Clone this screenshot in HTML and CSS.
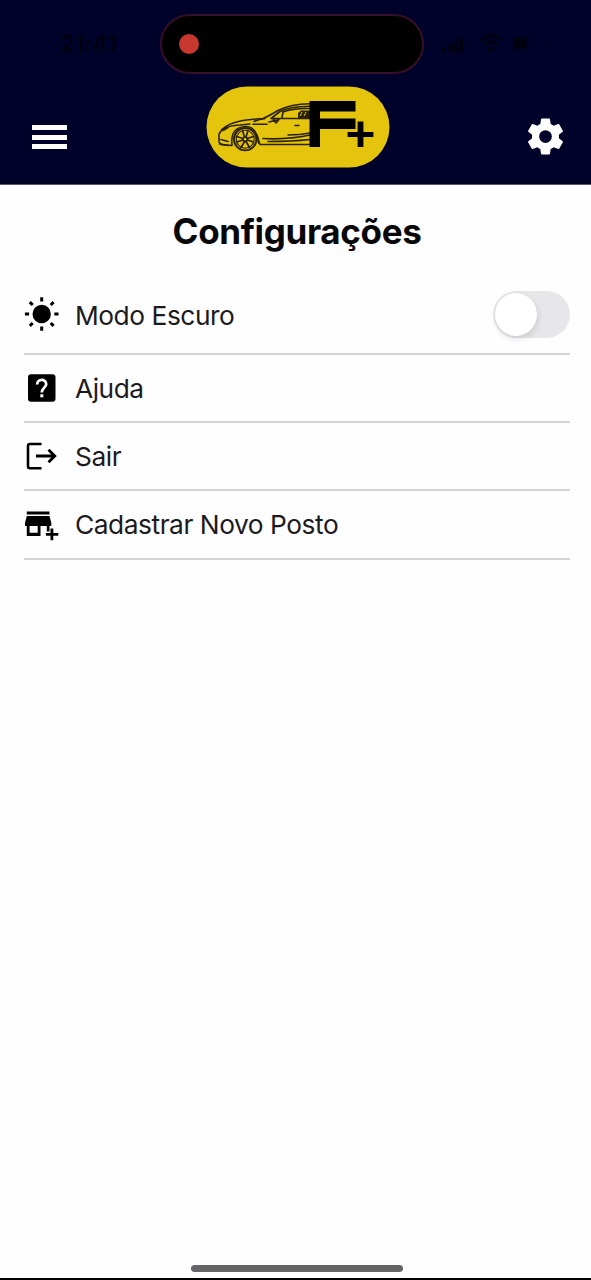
FILE: index.html
```
<!DOCTYPE html>
<html lang="pt-BR">
<head>
<meta charset="utf-8">
<title>Configurações</title>
<link rel="stylesheet" href="styles.css">
</head>
<body>
<div class="screen">
  <header class="header">
    <div class="status">
      <span class="time">21:41</span>
      <div class="island"><span class="record"></span></div>
      <svg class="signals" viewBox="440 30 112 26">
        <path d="M442 47h4v5h-4zM448.500 44.500h4v7.500h-4zM454 41.500h4v10.500h-4zM459.500 38h4v14h-4z"/>
        <g fill="none" stroke="#000010" stroke-width="3"><path d="M480.500 40Q491 31.500 501.500 40M484 44.500Q491 39 498 44.500"/></g>
        <path d="M487 48q4-3 8 0l-4 4z"/>
        <rect x="514" y="37" width="13" height="12" rx="3"/>
        <rect x="512" y="35" width="34" height="16" rx="5" fill="none" stroke="#000024"/>
        <path d="M548 40v6" stroke="#00001e" stroke-width="2"/>
      </svg>
    </div>
    <nav class="bar">
      <div class="menu"><span></span><span></span><span></span></div>
      <svg class="logo" viewBox="206 86 184 82">
        <rect x="206.500" y="86.500" width="183" height="81" rx="40.500" fill="#e4c40c"/>
        <g fill="none" stroke="#2b2205" stroke-width="1.600" stroke-linecap="round" stroke-linejoin="round">
          <path d="M310 103.800C295 104 286 106.500 278 110.500Q270 115.500 263 118.500C247 119.500 230 121 222 129.500L219 134V141.500Q220 144.800 224 144.800L232 145.500"/>
          <path d="M222 129.500Q229 125.500 240 125L250 124M221 139.500L228 141.500M219.500 144L228 145.500M223 130.500L228 127.500M265 118.500Q258 119.500 254 121.500M253 124.300H267"/>
          <path d="M310 106.200Q289 106.500 280 111.500L271 118.500H310M283 112L282 118M310 108.500Q293 108 283 112"/>
          <path d="M269 122L279 119.500M273 118.500L276 123L279 119.500M257 135Q259 142 260 144.500H310M268 141.500Q292 141.500 310 139.500M263 138.500Q286 140 310 135M288 135Q300 135 310 133M295 125.500H299"/>
          <path d="M232 145Q230 127 246 126.500Q257 127 258.500 143"/>
          <circle cx="245.200" cy="139.200" r="11.200" stroke-width="1.900"/>
          <circle cx="245.200" cy="139.200" r="9" stroke-width="1.100"/>
          <circle cx="245.200" cy="139.200" r="2.200"/>
          <path stroke-width="1.700" d="M244.500 137L242.500 130.500M246 137L248 130.500M247 138.500L253.500 136.500M247.500 140L253.500 142M246 141.500L249.500 147.500M244.500 141.500L241 147.500M243 140L236.700 142M243 138.500L236.700 136.500"/>
        </g>
        <path d="M298 118V113L301 110.500H310V118z" fill="#2b2205"/>
        <path d="M300 116L302 112M304 116L306 112" stroke="#e4c40c" stroke-width="1"/>
        <path d="M309.500 101H355.500V111.500H320V118.500H355.500V129H320V147H309.500z" fill="#000"/>
        <path d="M347 131.500H357V121H364V131.500H374V137.500H364V147.500H357V137.500H347z" fill="#000" stroke="#e4c40c" stroke-width="1.200"/>
      </svg>
      <svg class="gear" viewBox="0 0 24 24"><path fill="#fff" d="M19.140 12.940c.04-.3.06-.61.06-.94 0-.32-.02-.64-.07-.94l2.030-1.580a.49.49 0 0 0 .12-.61l-1.920-3.320a.488.488 0 0 0-.59-.22l-2.390.96c-.5-.38-1.030-.7-1.620-.94l-.36-2.540a.484.484 0 0 0-.48-.41h-3.840c-.24 0-.43.17-.47.41l-.36 2.540c-.59.24-1.130.57-1.620.94l-2.390-.96c-.22-.08-.47 0-.59.22L2.740 8.870c-.12.21-.08.47.12.61l2.030 1.580c-.05.3-.09.63-.09.94s.02.64.07.94l-2.030 1.580a.49.49 0 0 0-.12.61l1.920 3.320c.12.22.37.29.59.22l2.390-.96c.5.38 1.030.7 1.620.94l.36 2.540c.05.24.24.41.48.41h3.840c.24 0 .44-.17.47-.41l.36-2.540c.59-.24 1.130-.56 1.620-.94l2.390.96c.22.08.47 0 .59-.22l1.920-3.320c.12-.22.07-.47-.12-.61l-2.010-1.580zM12 15.400A3.400 3.400 0 1 1 12 8.600a3.400 3.400 0 0 1 0 6.800z"/></svg>
    </nav>
  </header>
  <main class="content">
    <h1 class="title">Configurações</h1>
    <ul class="list">
      <li class="row row-tall">
        <svg class="icon" viewBox="0 0 36 36"><circle cx="17.700" cy="18" r="9.200"/><path fill="none" stroke="#000" stroke-width="3" d="M17.700 1.200v4.200M17.700 30.600v4.200M.9 18h4.200M30.300 18h4.200M5.800 6.100l2.900 2.900M26.700 27l2.900 2.900M29.600 6.100l-2.900 2.900M8.700 27l-2.900 2.900"/></svg>
        <span class="label dark">Modo Escuro</span>
        <span class="switch"><span class="knob"></span></span>
      </li>
      <li class="row">
        <svg class="icon" viewBox="0 0 36 36"><rect x="4" y="4.300" width="27.500" height="27.400" rx="3"/><path fill="none" stroke="#fff" stroke-width="2.700" d="M13.200 14.500C13.200 8.400 22.200 8.400 22.200 14.200C22.200 17.500 17.800 18 17.800 22.500"/><rect x="16.300" y="24.300" width="3" height="3" fill="#fff"/></svg>
        <span class="label help">Ajuda</span>
      </li>
      <li class="row">
        <svg class="icon" viewBox="0 0 36 36"><path fill="none" stroke="#000" stroke-width="2.600" stroke-linejoin="round" d="M17.500 6H6Q4 6 4 8V28.200Q4 30.200 6 30.200H17.500"/><path fill="none" stroke="#000" stroke-width="2.800" d="M12 18H31M24.500 11.700L30.800 18L24.500 24.300"/></svg>
        <span class="label exit">Sair</span>
      </li>
      <li class="row">
        <svg class="icon" viewBox="0 0 36 36"><path fill-rule="evenodd" d="M2.800 5.500H25.500V8.500H2.800zM2.800 10H25.500L27.300 17V20H25.500V25.500H22.800V20H16.500V30H2.800V20H1V17zM5.600 20V26.700H13.700V20z"/><path d="M26.500 22.500h2.800v4.500h5v2.800h-5v4.400h-2.800v-4.400h-4.600v-2.800h4.600z"/></svg>
        <span class="label station">Cadastrar Novo Posto</span>
      </li>
    </ul>
  </main>
  <footer class="home"><span></span></footer>
</div>
</body>
</html>
```
FILE: styles.css
```
* { box-sizing: border-box; }
body { margin: 0; font-family: Inter, "Liberation Sans", sans-serif; }
.screen { display: flex; flex-direction: column; width: 591px; height: 1280px; background: #fefdff; border-bottom: 2px solid #000; }
.header { height: 185px; background: #00022a; border-bottom: 1px solid #55566a; }
.status { display: flex; height: 86px; padding-top: 14px; }
.time { width: 160px; padding: 17px 0 0 60px; font-size: 23px; line-height: 26px; font-weight: 600; letter-spacing: .4px; color: #000010; }
.island { width: 264px; height: 60px; border: 2px solid #351026; border-radius: 30px; background: #000; padding: 18px 17px; }
.record { display: block; width: 20px; height: 20px; border-radius: 50%; background: #c7382f; }
.signals { width: 112px; height: 26px; margin: 16px 0 0 16px; fill: #000010; }
.bar { display: grid; grid-template-columns: 1fr 184px 1fr; height: 82px; padding: 0 23px 0 32px; }
.menu { display: grid; gap: 4.700px; align-content: start; padding-top: 39px; }
.menu span { width: 35px; height: 5px; background: #fff; }
.logo { width: 184px; height: 82px; margin-left: -2px; }
.gear { width: 45px; height: 45px; justify-self: end; margin-top: 28px; }
.content { flex: 1; padding: 0 21px 0 24px; }
.title { margin: 0; padding-top: 24px; height: 91px; text-align: center; font-size: 35px; line-height: 44px; font-weight: 700; letter-spacing: -.35px; color: #08080b; }
.list { list-style: none; margin: 0; padding: 0; }
.row { display: flex; align-items: center; height: 68.200px; border-bottom: 2px solid #d4d3d7; }
.row-tall { height: 79px; }
.icon { width: 36px; height: 36px; margin-right: 15px; }
.row-tall .icon { margin-bottom: 1px; }
.label { padding-top: 2px; font-size: 26.300px; line-height: 36px; letter-spacing: -.45px; color: #1b1b1e; white-space: nowrap; }
.switch { width: 77px; height: 47px; margin-left: auto; padding: 2px; border-radius: 24px; background: #e7e6e8; }
.knob { display: block; width: 42px; height: 43px; border-radius: 50%; background: #fff; box-shadow: 1px 3px 6px rgba(0,0,0,.12); }
.home { display: flex; justify-content: center; height: 13px; padding-left: 3px; }
.home span { width: 212px; height: 7px; border-radius: 4px; background: #656466; }
```
